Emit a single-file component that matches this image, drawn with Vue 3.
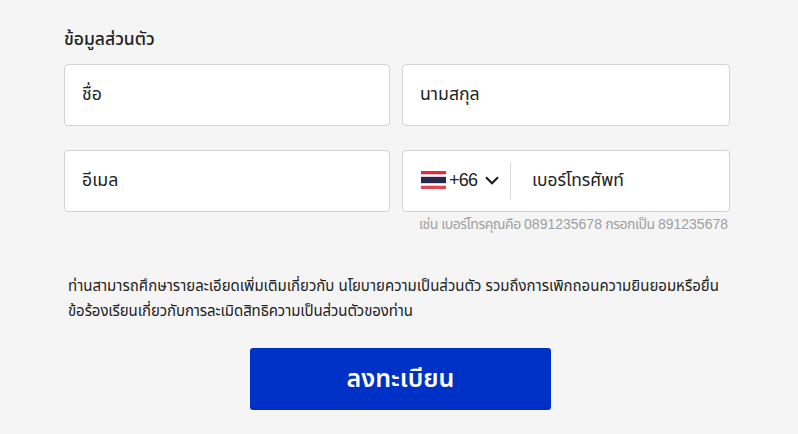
<script setup>
import { ref } from 'vue';

const firstName = ref('');
const lastName = ref('');
const email = ref('');
const phone = ref('');
</script>

<template>
    <form class="register" @submit.prevent>
        <h2 class="register-ttl">ข้อมูลส่วนตัว</h2>
        <div class="fields">
            <input v-model="firstName" class="field" type="text" placeholder="ชื่อ">
            <input v-model="lastName" class="field" type="text" placeholder="นามสกุล">
            <input v-model="email" class="field" type="text" placeholder="อีเมล">
            <div class="field phone">
                <div class="country">
                    <svg class="flag" width="25" height="18" viewBox="0 0 25 18">
                        <path fill="#fff" d="M0 0h25v18H0z" />
                        <path fill="#e32b36" d="M0 0h25v3.3H0z" />
                        <path fill="#e5454e" d="M0 14.7h25V18H0z" />
                        <path fill="#c9c8d6" d="M0 5.3h25v7.4H0z" />
                        <path fill="#28264f" d="M0 6h25v6H0z" />
                    </svg>
                    <span class="code">+66</span>
                    <svg class="arrow" width="14" height="9" viewBox="0 0 14 9">
                        <path d="M1 1.2l6 6 6-6" fill="none" stroke="#1c1c1c" stroke-width="2.2" />
                    </svg>
                </div>
                <input v-model="phone" class="phone-input" type="tel" placeholder="เบอร์โทรศัพท์">
            </div>
        </div>
        <p class="hint">เช่น เบอร์โทรคุณคือ <span>0891235678</span> กรอกเป็น <span>891235678</span></p>
        <p class="policy">
            ท่านสามารถศึกษารายละเอียดเพิ่มเติมเกี่ยวกับ นโยบายความเป็นส่วนตัว รวมถึงการเพิกถอนความยินยอมหรือยื่น<br>
            <span class="policy-end">ข้อร้องเรียนเกี่ยวกับการละเมิดสิทธิความเป็นส่วนตัวของท่าน</span>
        </p>
        <button class="submit-btn" type="submit">ลงทะเบียน</button>
    </form>
</template>

<style>
body {
    background: #f5f5f5;
}
</style>

<style scoped>
.register {
    box-sizing: border-box;
    width: 798px;
    height: 434px;
    padding: 26px 68px 0 64px;
    overflow: hidden;
    color: #222;
    font-family: "Liberation Sans", "Noto Sans Thai", "Noto Sans", sans-serif;
}
.register-ttl {
    height: 26px;
    margin: 0 0 12px;
    font-size: 17.5px;
    font-weight: 500;
    line-height: 27px;
}
.fields {
    display: grid;
    grid-template-columns: 326px 328px;
    grid-auto-rows: 62px;
    gap: 24px 12px;
}
.field {
    box-sizing: border-box;
    width: 100%;
    padding: 0 18px 2px 17px;
    border: 1px solid #d3d3d3;
    border-radius: 4px;
    background: #fff;
    color: #222;
    font-family: inherit;
    font-size: 17.7px;
}
.field::placeholder,
.phone-input::placeholder {
    color: #222;
    opacity: 1;
}
.phone {
    display: flex;
    align-items: center;
    padding-left: 18px;
}
.country {
    display: flex;
    align-items: center;
    height: 37px;
    width: 89px;
    border-right: 1px solid #ddd;
}
.code {
    margin-left: 3px;
    font-size: 18px;
    letter-spacing: -.7px;
}
.arrow {
    margin-left: 8px;
}
.phone-input {
    flex: 1;
    min-width: 0;
    padding: 0 0 0 21px;
    border: 0;
    outline: 0;
    background: none;
    font-family: inherit;
    font-size: 17.4px;
}
.hint {
    margin: 0 2px 0 0;
    color: #a0a0a0;
    font-size: 14px;
    letter-spacing: -.5px;
    line-height: 24px;
    text-align: right;
    white-space: nowrap;
    span {
        letter-spacing: 0;
    }
}
.policy {
    margin: 37px 0 0 4px;
    font-size: 15px;
    line-height: 25px;
    white-space: nowrap;
}
.policy-end {
    letter-spacing: -.09px;
}
.submit-btn {
    display: block;
    width: 301px;
    height: 62px;
    margin: 25px 0 0 186px;
    padding: 0;
    border: 0;
    border-radius: 3px;
    background: #0031c6;
    color: #fff;
    font-family: inherit;
    font-size: 25px;
    font-weight: 600;
}
</style>
